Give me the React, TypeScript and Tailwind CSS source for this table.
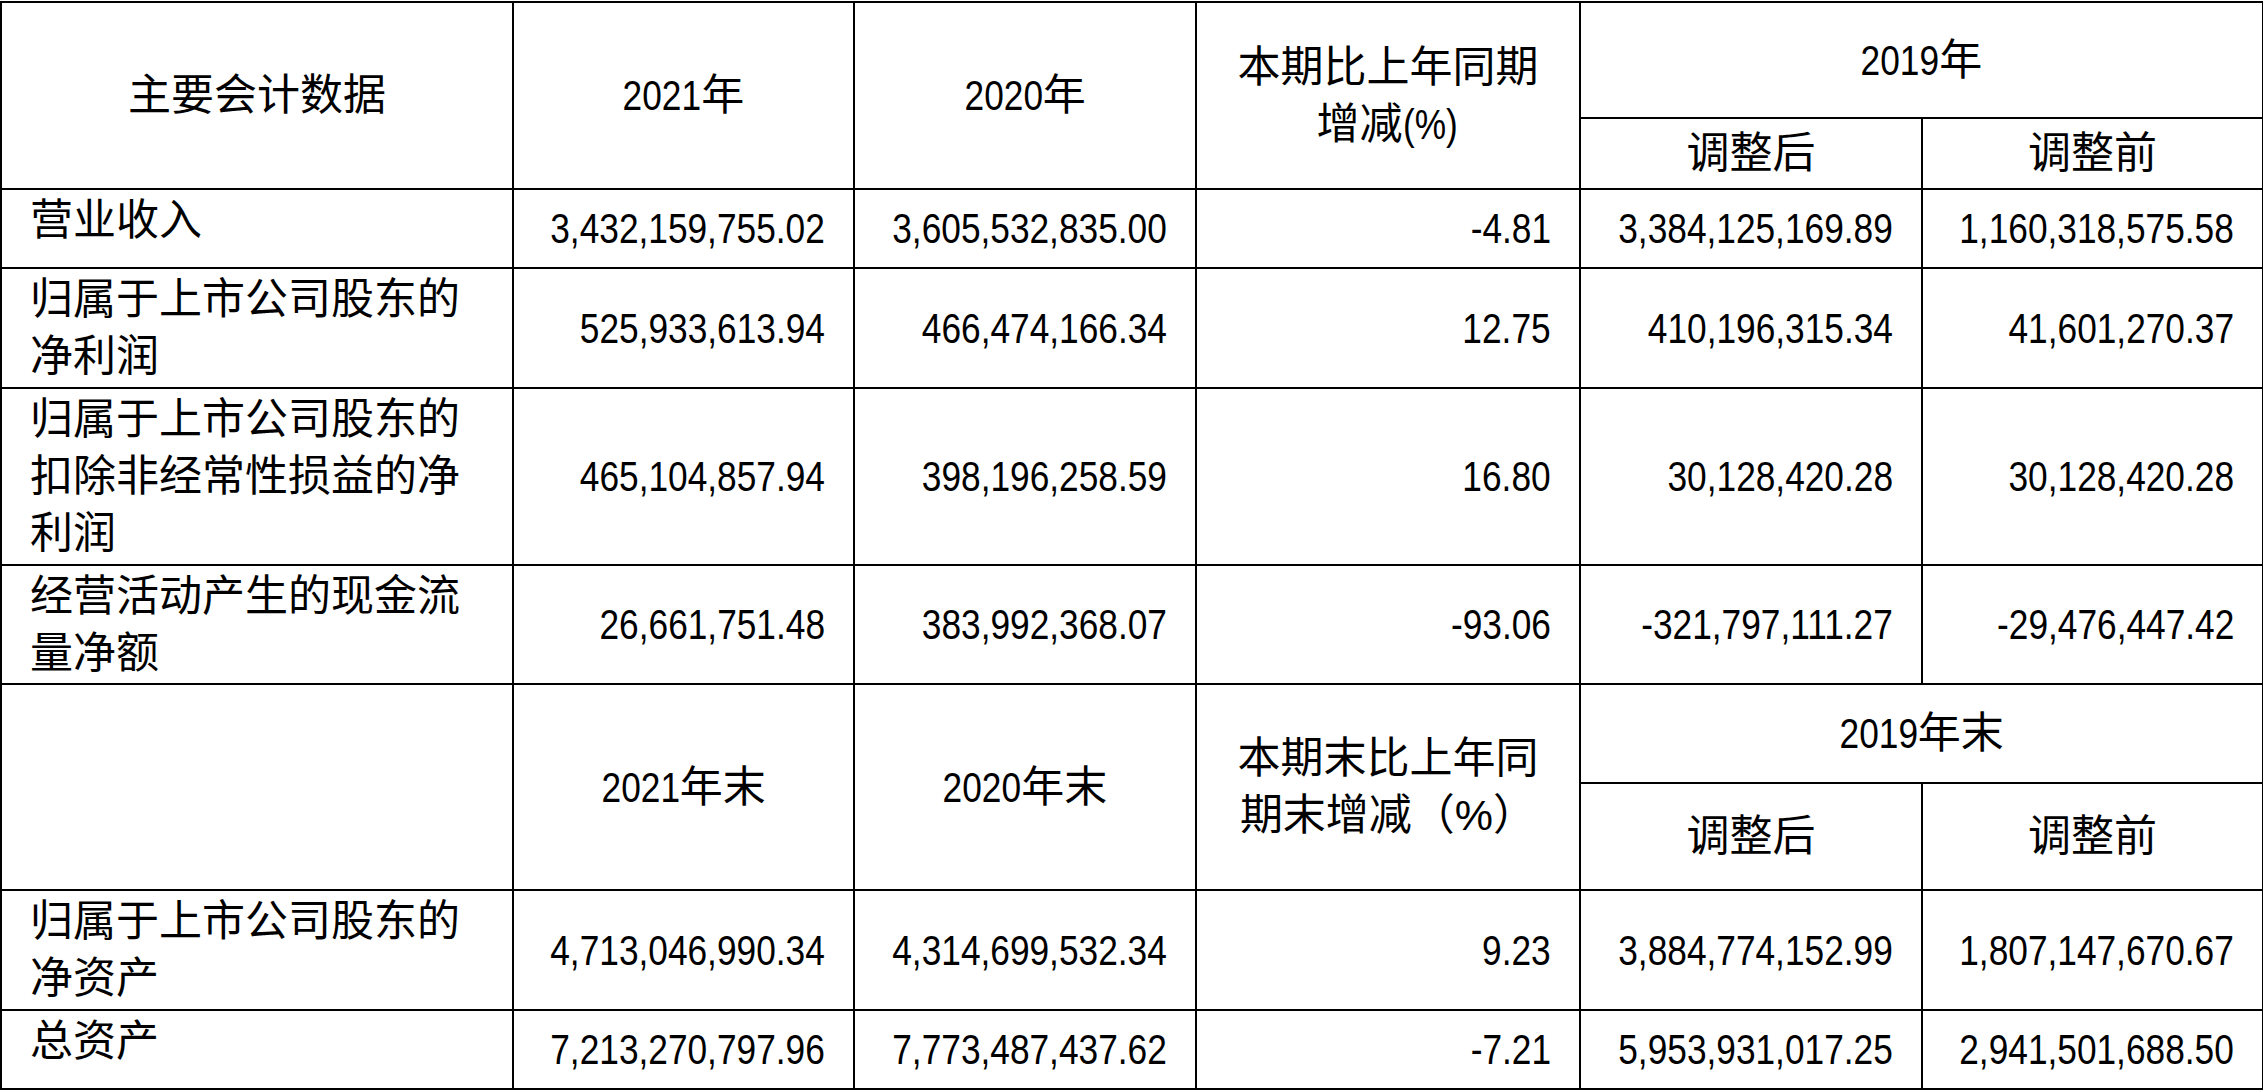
import React from "react";

const font = {
  fontFamily:
    "'Liberation Sans Narrow', 'Liberation Sans', 'Noto Sans CJK SC', sans-serif",
};

type Row = { label: string[]; h: string; vals: string[] };

const top: Row[] = [
  {
    label: ["营业收入"],
    h: "h-[79px]",
    vals: ["3,432,159,755.02", "3,605,532,835.00", "-4.81", "3,384,125,169.89", "1,160,318,575.58"],
  },
  {
    label: ["归属于上市公司股东的", "净利润"],
    h: "h-[120px]",
    vals: ["525,933,613.94", "466,474,166.34", "12.75", "410,196,315.34", "41,601,270.37"],
  },
  {
    label: ["归属于上市公司股东的", "扣除非经常性损益的净", "利润"],
    h: "h-[177px]",
    vals: ["465,104,857.94", "398,196,258.59", "16.80", "30,128,420.28", "30,128,420.28"],
  },
  {
    label: ["经营活动产生的现金流", "量净额"],
    h: "h-[119px]",
    vals: ["26,661,751.48", "383,992,368.07", "-93.06", "-321,797,111.27", "-29,476,447.42"],
  },
];

const bottom: Row[] = [
  {
    label: ["归属于上市公司股东的", "净资产"],
    h: "h-[120px]",
    vals: ["4,713,046,990.34", "4,314,699,532.34", "9.23", "3,884,774,152.99", "1,807,147,670.67"],
  },
  {
    label: ["总资产"],
    h: "h-[79px]",
    vals: ["7,213,270,797.96", "7,773,487,437.62", "-7.21", "5,953,931,017.25", "2,941,501,688.50"],
  },
];

const cell = "border-2 border-black";
const head = `${cell} text-center align-middle px-2`;
const lbl = `${cell} align-top text-left pl-[28px] pr-2 pt-[2px]`;
const val = `${cell} align-middle pr-[28px] pl-2 whitespace-nowrap`;

function Lines({ lines }: { lines: React.ReactNode[] }) {
  return (
    <>
      {lines.map((l, i) => (
        <span key={i} className="block whitespace-nowrap">
          {l}
        </span>
      ))}
    </>
  );
}

/* four narrow digits (Arial Narrow look) inside centred header text */
function Year({ y }: { y: string }) {
  return <span className="inline-block origin-center scale-x-[0.82] mx-[-8.5px]">{y}</span>;
}

function DataRow({ r }: { r: Row }) {
  return (
    <tr className={r.h}>
      <td className={lbl}>
        <Lines lines={r.label} />
      </td>
      {r.vals.map((v, i) => (
        <td key={i} className={val}>
          <div className="flex justify-end">
            <span className="shrink-0 inline-block origin-right scale-x-[0.82]">{v}</span>
          </div>
        </td>
      ))}
    </tr>
  );
}

export default function App() {
  return (
    <div className="w-[2263px] h-[1091px] bg-white text-black overflow-hidden" style={font}>
      <table className="border-collapse table-fixed w-[2262px] text-[43px] leading-[57px] mt-[1px]">
        <colgroup>
          <col className="w-[512px]" />
          <col className="w-[341px]" />
          <col className="w-[342px]" />
          <col className="w-[384px]" />
          <col className="w-[342px]" />
          <col className="w-[341px]" />
        </colgroup>
        <tbody>
          <tr className="h-[116px]">
            <td rowSpan={2} className={head}>
              主要会计数据
            </td>
            <td rowSpan={2} className={head}>
              <Year y="2021" />年
            </td>
            <td rowSpan={2} className={head}>
              <Year y="2020" />年
            </td>
            <td rowSpan={2} className={head}>
              <Lines
                lines={[
                  "本期比上年同期",
                  <>
                    增减<span className="inline-block origin-left scale-x-[0.82] mr-[-10px]">(%)</span>
                  </>,
                ]}
              />
            </td>
            <td colSpan={2} className={head}>
              <Year y="2019" />年
            </td>
          </tr>
          <tr className="h-[71px]">
            <td className={head}>调整后</td>
            <td className={head}>调整前</td>
          </tr>
          {top.map((r, i) => (
            <DataRow key={i} r={r} />
          ))}
          <tr className="h-[99px]">
            <td rowSpan={2} className={head}></td>
            <td rowSpan={2} className={head}>
              <Year y="2021" />年末
            </td>
            <td rowSpan={2} className={head}>
              <Year y="2020" />年末
            </td>
            <td rowSpan={2} className={head}>
              <Lines lines={["本期末比上年同", "期末增减（%）"]} />
            </td>
            <td colSpan={2} className={head}>
              <Year y="2019" />年末
            </td>
          </tr>
          <tr className="h-[107px]">
            <td className={head}>调整后</td>
            <td className={head}>调整前</td>
          </tr>
          {bottom.map((r, i) => (
            <DataRow key={i} r={r} />
          ))}
        </tbody>
      </table>
    </div>
  );
}
